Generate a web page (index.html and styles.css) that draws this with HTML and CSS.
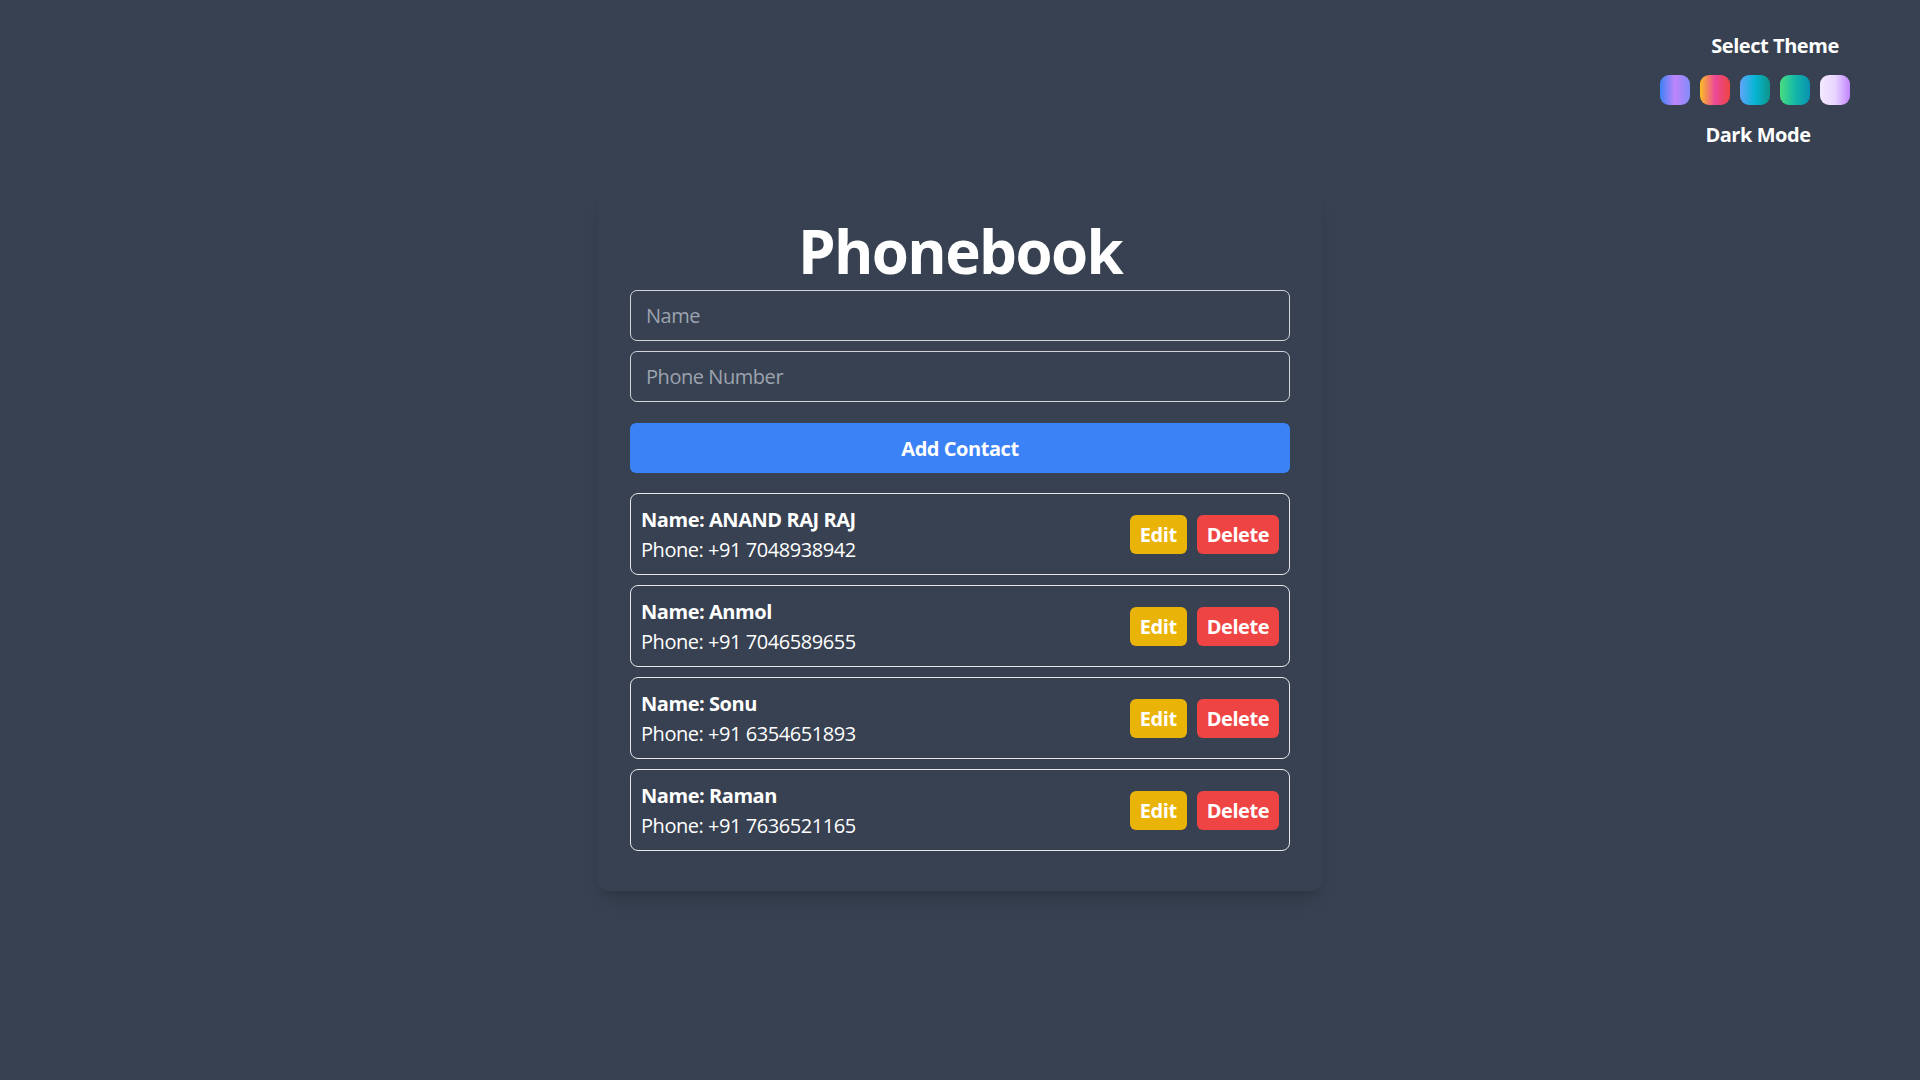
FILE: index.html
```html
<!DOCTYPE html>
<html lang="en">
<head>
<meta charset="utf-8">
<title>Phonebook</title>
<link rel="stylesheet" href="styles.css">
</head>
<body>
<header class="topbar">
  <div class="theme-panel">
    <div class="theme-title">Select Theme</div>
    <div class="swatches">
      <button class="swatch sw-1" aria-label="Theme 1"></button>
      <button class="swatch sw-2" aria-label="Theme 2"></button>
      <button class="swatch sw-3" aria-label="Theme 3"></button>
      <button class="swatch sw-4" aria-label="Theme 4"></button>
      <button class="swatch sw-5" aria-label="Theme 5"></button>
    </div>
    <button class="dark-toggle">Dark Mode</button>
  </div>
</header>
<main class="page">
  <section class="card">
    <h1 class="title">Phonebook</h1>
    <input class="field" type="text" placeholder="Name">
    <input class="field" type="text" placeholder="Phone Number">
    <button class="add-btn">Add Contact</button>
    <ul class="contacts">
      <li class="contact">
        <div class="info">
          <div class="c-name">Name: ANAND RAJ RAJ</div>
          <div class="c-phone">Phone: +91 7048938942</div>
        </div>
        <div class="actions"><button class="btn edit">Edit</button><button class="btn del">Delete</button></div>
      </li>
      <li class="contact">
        <div class="info">
          <div class="c-name">Name: Anmol</div>
          <div class="c-phone">Phone: +91 7046589655</div>
        </div>
        <div class="actions"><button class="btn edit">Edit</button><button class="btn del">Delete</button></div>
      </li>
      <li class="contact">
        <div class="info">
          <div class="c-name">Name: Sonu</div>
          <div class="c-phone">Phone: +91 6354651893</div>
        </div>
        <div class="actions"><button class="btn edit">Edit</button><button class="btn del">Delete</button></div>
      </li>
      <li class="contact">
        <div class="info">
          <div class="c-name">Name: Raman</div>
          <div class="c-phone">Phone: +91 7636521165</div>
        </div>
        <div class="actions"><button class="btn edit">Edit</button><button class="btn del">Delete</button></div>
      </li>
    </ul>
  </section>
</main>
</body>
</html>
```
FILE: styles.css
```css
* { box-sizing: border-box; }
html, body { margin: 0; padding: 0; }
body {
  background: #374151;
  color: #ffffff;
  font-family: "Open Sans", "Noto Sans", sans-serif;
  font-size: 20px;
  line-height: 30px;
  letter-spacing: -0.45px;
  min-height: 1080px;
}
button { font-family: inherit; letter-spacing: inherit; cursor: pointer; }

.topbar {
  display: flex;
  justify-content: flex-end;
  padding: 31px 30px 0 0;
  height: 191px;
}
.theme-panel {
  width: 230px;
  display: flex;
  flex-direction: column;
}
.theme-title {
  font-weight: 700;
  text-align: center;
  line-height: 30px;
}
.swatches {
  display: flex;
  gap: 10px;
  margin-top: 14px;
}
.swatch {
  width: 30px;
  height: 30px;
  border: 0;
  padding: 0;
  border-radius: 9px;
}
.sw-1 { background: linear-gradient(to right, #3b82f6, #c084fc, #818cf8); }
.sw-2 { background: linear-gradient(to right, #fbbf24, #ec4899, #ef4444); }
.sw-3 { background: linear-gradient(to right, #60a5fa, #06b6d4, #0d9488); }
.sw-4 { background: linear-gradient(to right, #4ade80, #14b8a6, #0891b2); }
.sw-5 { background: linear-gradient(to right, #f3e8ff, #e9d5ff, #c084fc); }
.dark-toggle {
  align-self: flex-start;
  width: 196px;
  margin-top: 15px;
  background: none;
  border: 0;
  padding: 0;
  color: #ffffff;
  font-size: 20px;
  font-weight: 700;
  line-height: 30px;
  text-align: center;
}

.page {
  display: flex;
  justify-content: center;
}
.card {
  width: 724px;
  padding: 30px 32px;
  background: #374151;
  border-radius: 10px;
  box-shadow: 0 12px 18px -4px rgba(0,0,0,0.12), 0 5px 8px -5px rgba(0,0,0,0.12);
}
.title {
  margin: 0 0 9px;
  font-size: 60px;
  line-height: 60px;
  font-weight: 700;
  letter-spacing: -1.6px;
  text-align: center;
}
.field {
  display: block;
  width: 100%;
  height: 51px;
  margin: 0 0 10px;
  padding: 0 15px;
  background: transparent;
  border: 1px solid #d1d5db;
  border-radius: 7px;
  color: #ffffff;
  font-family: inherit;
  letter-spacing: inherit;
  font-size: 20px;
  outline: none;
}
.field::placeholder { color: #9ca3af; }
.add-btn {
  display: block;
  width: 100%;
  height: 50px;
  margin-top: 21px;
  border: 0;
  border-radius: 6px;
  background: #3b82f6;
  color: #ffffff;
  font-size: 20px;
  font-weight: 700;
}
.contacts {
  list-style: none;
  margin: 20px 0 0;
  padding: 0;
}
.contact {
  display: flex;
  align-items: center;
  justify-content: space-between;
  padding: 11px 10px 9px;
  margin-bottom: 10px;
  border: 1px solid #e5e7eb;
  border-radius: 8px;
}
.c-name { font-weight: 700; }
.actions { display: flex; gap: 10px; margin-top: -2px; }
.btn {
  height: 39px;
  padding: 0 10px;
  border: 0;
  border-radius: 6px;
  color: #ffffff;
  font-size: 20px;
  font-weight: 700;
}
.edit { background: #eab308; }
.del { background: #ef4444; }
```
